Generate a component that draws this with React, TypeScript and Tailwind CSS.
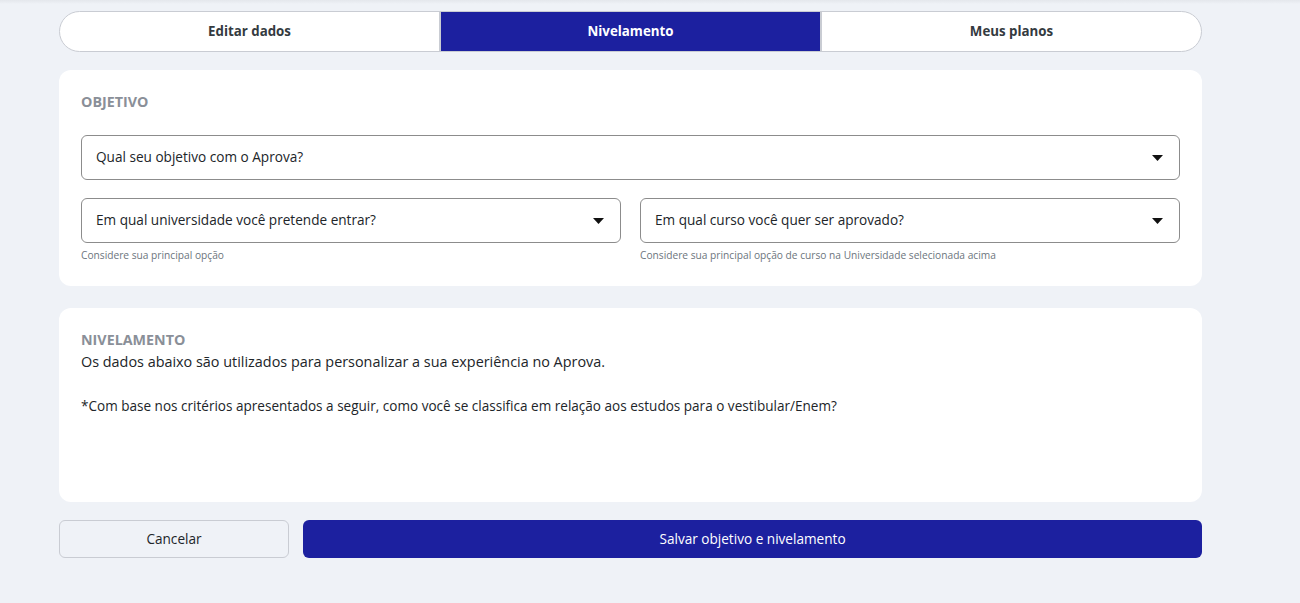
import React from "react";

function Caret() {
  return (
    <svg width="11" height="6" viewBox="0 0 11 6" className="shrink-0">
      <path d="M0 0 L11 0 L5.5 6 Z" fill="#111" />
    </svg>
  );
}

function Select({ label }: { label: string }) {
  return (
    <div className="flex h-[45px] items-center justify-between rounded-[6px] border border-[#8c8c8c] bg-white pl-[14px] pr-[16px]">
      <span className="text-[13.6px] text-[#212529]">{label}</span>
      <Caret />
    </div>
  );
}

export default function App() {
  return (
    <div
      className="min-h-[603px] w-full bg-[#eff2f7] text-[#212529]"
      style={{ fontFamily: '"Open Sans", "Noto Sans", sans-serif' }}
    >
      <div className="h-[4px] bg-gradient-to-b from-[#e4e7ec] to-[#eff2f7]" />
      <div className="ml-[59px] w-[1143px] pt-[7px]">
        <div className="flex h-[41px] overflow-hidden rounded-full border border-[#c9ccd3] bg-white">
          <div className="flex flex-1 items-center justify-center text-[13.3px] font-bold text-[#343a40]">
            Editar dados
          </div>
          <div className="flex flex-1 items-center justify-center border-x-2 border-[#c9ccd3] bg-[#1c209f] text-[13.3px] font-bold text-white">
            Nivelamento
          </div>
          <div className="flex flex-1 items-center justify-center text-[13.3px] font-bold text-[#343a40]">
            Meus planos
          </div>
        </div>

        <div className="mt-[18px] rounded-[12px] bg-white px-[22px] pb-[24px] pt-[22px]">
          <div className="text-[14.3px] font-bold leading-[20px] text-[#8a8f98]">OBJETIVO</div>
          <div className="mt-[23px]">
            <Select label="Qual seu objetivo com o Aprova?" />
          </div>
          <div className="mt-[18px] grid grid-cols-2 gap-[19px]">
            <div>
              <Select label="Em qual universidade você pretende entrar?" />
              <div className="mt-[5px] text-[10.2px] leading-[14px] text-[#6c757d]">Considere sua principal opção</div>
            </div>
            <div>
              <Select label="Em qual curso você quer ser aprovado?" />
              <div className="mt-[5px] text-[10.2px] leading-[14px] text-[#6c757d]">
                Considere sua principal opção de curso na Universidade selecionada acima
              </div>
            </div>
          </div>
        </div>

        <div className="mt-[22px] h-[194px] rounded-[12px] bg-white px-[22px] pt-[22px]">
          <div className="text-[14.3px] font-bold leading-[20px] text-[#8a8f98]">NIVELAMENTO</div>
          <div className="mt-[2px] text-[14.4px] leading-[20px] text-[#212529]">
            Os dados abaixo são utilizados para personalizar a sua experiência no Aprova.
          </div>
          <div className="mt-[24px] text-[13.55px] leading-[20px] text-[#212529]">
            *Com base nos critérios apresentados a seguir, como você se classifica em relação aos estudos para o vestibular/Enem?
          </div>
        </div>

        <div className="mt-[18px] flex gap-[14px]">
          <button className="h-[38px] w-[230px] rounded-[6px] border border-[#c9ccd3] bg-[#eff2f7] text-[13.6px] text-[#212529]">
            Cancelar
          </button>
          <button className="h-[38px] flex-1 rounded-[6px] bg-[#1c209f] text-[13.6px] text-white">
            Salvar objetivo e nivelamento
          </button>
        </div>
      </div>
    </div>
  );
}
